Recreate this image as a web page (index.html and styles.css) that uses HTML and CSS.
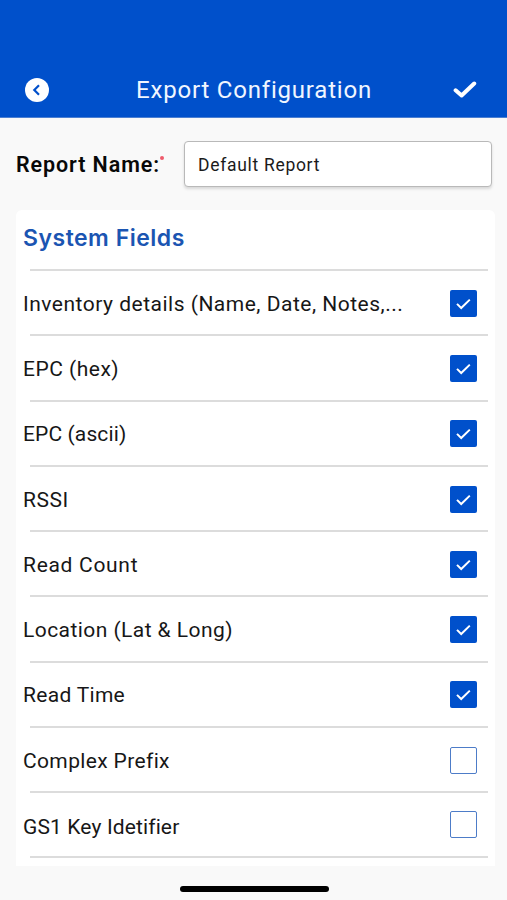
FILE: index.html
```html
<!DOCTYPE html>
<html lang="en">
<head>
<meta charset="utf-8">
<title>Export Configuration</title>
<link rel="stylesheet" href="styles.css">
</head>
<body>
<svg class="defs" width="0" height="0"><symbol id="tick" viewBox="0 0 27 27"><path d="M7 13.9l4.2 4.1 8.6-8.4" fill="none" stroke="#fff" stroke-width="2"/></symbol></svg>
<header class="topbar">
  <svg class="back" viewBox="0 0 24 24"><circle cx="12" cy="12" r="12" fill="#fff"/><path d="M14 7.3L9.3 12l4.7 4.7" fill="none" stroke="#0050cb" stroke-width="2.2"/></svg>
  <h1 class="title">Export Configuration</h1>
  <svg class="save" viewBox="0 0 24 18"><path d="M2.6 9.3l6 5.2L21.2 2.5" fill="none" stroke="#fff" stroke-width="4" stroke-linecap="round" stroke-linejoin="round"/></svg>
</header>
<main class="content">
  <div class="report">
    <label class="report-label" for="name">Report Name:</label><span class="required"></span>
    <input class="report-input" id="name" value="Default Report">
  </div>
  <section class="card">
    <h2 class="card-title">System Fields</h2>
    <ul class="fields">
      <li class="field"><span class="name">Inventory details (Name, Date, Notes,...</span><svg class="box checked"><use href="#tick"/></svg></li>
      <li class="field"><span class="name">EPC (hex)</span><svg class="box checked"><use href="#tick"/></svg></li>
      <li class="field"><span class="name ascii">EPC (ascii)</span><svg class="box checked"><use href="#tick"/></svg></li>
      <li class="field"><span class="name">RSSI</span><svg class="box checked"><use href="#tick"/></svg></li>
      <li class="field"><span class="name count">Read Count</span><svg class="box checked"><use href="#tick"/></svg></li>
      <li class="field"><span class="name location">Location (Lat &amp; Long)</span><svg class="box checked"><use href="#tick"/></svg></li>
      <li class="field"><span class="name time">Read Time</span><svg class="box checked"><use href="#tick"/></svg></li>
      <li class="field"><span class="name prefix">Complex Prefix</span><span class="box"></span></li>
      <li class="field last"><span class="name gs1">GS1 Key Idetifier</span><span class="box"></span></li>
    </ul>
  </section>
</main>
<div class="home"></div>
</body>
</html>
```
FILE: styles.css
```css
* { box-sizing: border-box; }
body { margin: 0; height: 900px; overflow: hidden; background: #f9f9f9; color: #171717; font-family: Roboto, "Liberation Sans", sans-serif; display: flex; flex-direction: column; }
.defs { position: absolute; }
h1, h2, ul { margin: 0; padding: 0; }
.topbar { height: 118px; flex: none; background: #0050cb; border-bottom: 1px solid #4b7fd2; padding: 62px 30px 0 25px; display: flex; align-items: center; justify-content: space-between; }
.back { width: 24px; height: 24px; }
.title { color: #f0f6ff; font-size: 24px; font-weight: 400; line-height: 30px; letter-spacing: 0.8px; white-space: nowrap; padding-left: 6px; }
.save { width: 24px; height: 18px; }
.content { padding: 23px 12px 0 16px; flex: 1; }
.report { display: flex; align-items: center; height: 46px; padding-right: 3px; }
.report-label { font-size: 21.5px; font-weight: 600; letter-spacing: 0.9px; color: #080808; white-space: nowrap; width: 144px; }
.required { width: 4px; height: 4px; border-radius: 50%; background: #ef5b6c; margin: 0 20px 13px 0; flex: none; }
.report-input { flex: 1; min-width: 0; height: 46px; padding: 2px 13px 0; border: 1.5px solid #b9b9b9; border-radius: 4px; background: #fff; box-shadow: 0 2px 3px #0002; color: #1b1b1b; font: 17.5px Roboto, sans-serif; letter-spacing: 0.7px; }
.card { margin-top: 23px; height: 656px; background: #fff; border-radius: 6px 6px 0 0; padding: 0 7px; }
.card-title { height: 59px; display: flex; align-items: center; color: #1b55b2; font: 600 23px/56px Inter, sans-serif; letter-spacing: 0.5px; padding-bottom: 3px; }
.fields { list-style: none; }
.field { height: 65.3px; display: flex; align-items: center; justify-content: space-between; padding: 4px 11px 0 0; background: linear-gradient(#dcdcdc, #dcdcdc) 7px 0 / 458px 2px no-repeat; }
.last { background-image: linear-gradient(#dcdcdc, #dcdcdc), linear-gradient(#dcdcdc, #dcdcdc); background-size: 458px 2px; background-position: 7px 0, 7px 100%; background-repeat: no-repeat; height: 66.6px; }
.name { font-size: 21px; line-height: 28px; letter-spacing: 0.5px; white-space: nowrap; }
.ascii { letter-spacing: 0.12px; }
.count { letter-spacing: 0.7px; }
.location { letter-spacing: 0.44px; }
.time { letter-spacing: 0.3px; }
.prefix { letter-spacing: 0.36px; }
.gs1 { letter-spacing: 0.13px; }
.box { width: 27px; height: 27px; flex: none; border-radius: 2px; border: 1.5px solid #4d7cc8; margin-bottom: 1px; }
.last .box { margin-bottom: 5px; }
.checked { background: #0050cb; border: 0; }
.home { width: 149px; height: 6px; border-radius: 3px; background: #000; margin: 0 auto 8px 180px; flex: none; }
```
